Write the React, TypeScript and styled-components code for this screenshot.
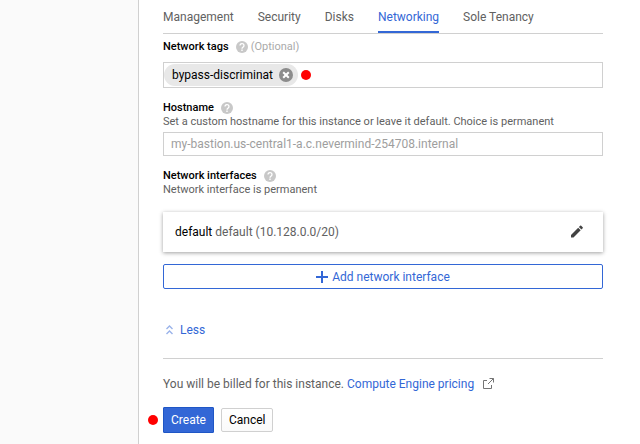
import React from "react";
import styled, { createGlobalStyle, css } from "styled-components";

const blue = "#3367d6";
const line = "#d0d0d0";

const GlobalStyle = createGlobalStyle`
  *, *::before, *::after { box-sizing: border-box; }
  body {
    margin: 0;
    background: #fff;
    color: #000;
    font: 12px/16px Roboto, "Liberation Sans", sans-serif;
  }
  button, input { font: inherit; }
  svg { display: block; flex: none; }
`;

const Page = styled.div`
  display: flex;
  min-height: 100vh;
`;

const SidePanel = styled.aside`
  flex: none;
  width: 139px;
  background: #fafafa;
  border-right: 1px solid ${line};
`;

const Form = styled.form`
  flex: 1;
  min-width: 0;
  padding: 0 37px 11px 24px;
`;

const TabList = styled.div`
  display: flex;
  gap: 24px;
  border-bottom: 1px solid ${line};
`;

const Tab = styled.button<{ $active?: boolean }>`
  height: 33px;
  padding: 2px 0 0;
  border: 0;
  border-bottom: 2px solid ${(p) => (p.$active ? blue : "transparent")};
  background: none;
  color: ${(p) => (p.$active ? blue : "#616161")};
  cursor: pointer;
`;

const Field = styled.section<{ $top: number }>`
  margin-top: ${(p) => p.$top}px;
`;

const FieldHead = styled.div`
  display: flex;
  align-items: center;
  height: 14px;
  font-size: 11px;
  line-height: 14px;
`;

const Label = styled.label`
  font-weight: 500;
`;

const HelpButton = styled.button`
  display: flex;
  margin-left: 6px;
  padding: 0;
  border: 0;
  background: none;
  cursor: help;
`;

const Optional = styled.span`
  margin-left: 3px;
  color: #aaa;
`;

const Hint = styled.p`
  margin: 0;
  color: #616161;
  font-size: 11px;
  line-height: 14px;
`;

const TagBox = styled.div`
  display: flex;
  align-items: center;
  height: 26px;
  margin-top: 8px;
  border: 1px solid ${line};
`;

const Chip = styled.span`
  display: flex;
  align-items: center;
  gap: 6px;
  height: 22px;
  padding: 0 5px 0 8px;
  border-radius: 11px;
  background: #e8e8e8;
`;

const ChipRemove = styled.button`
  padding: 0;
  border: 0;
  background: none;
  cursor: pointer;
`;

const TagInput = styled.input`
  flex: 1;
  min-width: 0;
  border: 0;
  outline: 0;
  background: none;
`;

const dot = css`
  width: 10px;
  height: 10px;
  border-radius: 50%;
  background: #f00;
`;

const TagMarker = styled.i`
  ${dot}
  margin-left: 3px;
`;

const ActionMarker = styled.i`
  ${dot}
  position: absolute;
  top: 8px;
  left: -15px;
`;

const TextInput = styled.input`
  display: block;
  width: 100%;
  height: 24px;
  margin-top: 3px;
  padding: 0 7px;
  border: 1px solid ${line};
  border-radius: 0;
  background: #fff;
  &::placeholder { color: #9e9e9e; opacity: 1; }
`;

const InterfaceCard = styled.div`
  display: flex;
  align-items: center;
  justify-content: space-between;
  height: 40px;
  margin-top: 15px;
  padding: 0 19px 0 12px;
  color: #616161;
  background: #fff;
  box-shadow: 0 1px 4px rgba(0, 0, 0, 0.38);
`;

const InterfaceName = styled.span`
  color: #000;
`;

const IconButton = styled.button`
  padding: 0;
  border: 0;
  background: none;
  cursor: pointer;
`;

const AddButton = styled.button`
  display: flex;
  align-items: center;
  justify-content: center;
  gap: 4px;
  width: 100%;
  height: 25px;
  margin-top: 12px;
  border: 1px solid ${blue};
  border-radius: 2px;
  background: #fff;
  color: ${blue};
  cursor: pointer;
`;

const LessButton = styled.button`
  display: flex;
  align-items: center;
  gap: 7px;
  margin-top: 33px;
  padding: 0 0 0 3px;
  border: 0;
  background: none;
  color: ${blue};
  cursor: pointer;
`;

const Billing = styled.div`
  display: flex;
  align-items: center;
  margin-top: 20px;
  padding-top: 17px;
  border-top: 1px solid ${line};
  color: #616161;
  white-space: pre;
`;

const PricingLink = styled.a`
  display: flex;
  align-items: center;
  gap: 8px;
  color: ${blue};
  text-decoration: none;
`;

const Actions = styled.div`
  position: relative;
  display: flex;
  align-items: center;
  gap: 7px;
  margin-top: 15px;
`;

const ActionButton = styled.button<{ $primary?: boolean }>`
  height: ${(p) => (p.$primary ? 26 : 24)}px;
  padding: 0 7px;
  border: 1px solid ${(p) => (p.$primary ? "#1f56c5" : line)};
  border-radius: ${(p) => (p.$primary ? 1 : 2)}px;
  background: ${(p) => (p.$primary ? blue : "linear-gradient(#fff, #fafafa)")};
  color: ${(p) => (p.$primary ? "#fff" : "#000")};
  cursor: pointer;
`;

const Help = ({ topic }: { topic: string }) => (
  <HelpButton type="button" aria-label={`Help: ${topic}`}>
    <svg width="13" height="12" viewBox="0 0 13 12">
      <circle cx="7" cy="6" r="6" fill="#c8c8c8" />
      <path d="M5 4.500a2 1.900 0 1 1 3.200 1.500C7.400 6.600 7 6.900 7 7.700" fill="none" stroke="#fff" strokeWidth="1.300" />
      <path d="M6.300 8.500h1.400v1.400H6.300z" fill="#fff" />
    </svg>
  </HelpButton>
);

const tabs = ["Management", "Security", "Disks", "Networking", "Sole Tenancy"];

export default function App() {
  return (
    <Page>
      <GlobalStyle />
      <SidePanel />
      <Form onSubmit={(e) => e.preventDefault()}>
        <TabList role="tablist">
          {tabs.map((name) => (
            <Tab key={name} type="button" role="tab" aria-selected={name === "Networking"} $active={name === "Networking"}>
              {name}
            </Tab>
          ))}
        </TabList>

        <Field $top={6}>
          <FieldHead>
            <Label htmlFor="tags">Network tags</Label>
            <Help topic="Network tags" />
            <Optional>(Optional)</Optional>
          </FieldHead>
          <TagBox>
            <Chip>
              bypass-discriminat
              <ChipRemove type="button" aria-label="Remove bypass-discriminat">
                <svg width="14" height="14" viewBox="0 0 14 14">
                  <circle cx="7" cy="7" r="7" fill="#8c8c8c" />
                  <path d="M4.200 4.200l5.600 5.600m0-5.600l-5.600 5.600" stroke="#fff" strokeWidth="2" />
                </svg>
              </ChipRemove>
            </Chip>
            <TagMarker />
            <TagInput id="tags" />
          </TagBox>
        </Field>

        <Field $top={13}>
          <FieldHead>
            <Label htmlFor="hostname">Hostname</Label>
            <Help topic="Hostname" />
          </FieldHead>
          <Hint>Set a custom hostname for this instance or leave it default. Choice is permanent</Hint>
          <TextInput id="hostname" placeholder="my-bastion.us-central1-a.c.nevermind-254708.internal" />
        </Field>

        <Field $top={13}>
          <FieldHead>
            <Label as="span">Network interfaces</Label>
            <Help topic="Network interfaces" />
          </FieldHead>
          <Hint>Network interface is permanent</Hint>
          <InterfaceCard>
            <span>
              <InterfaceName>default</InterfaceName> default (10.128.0.0/20)
            </span>
            <IconButton type="button" aria-label="Edit network interface">
              <svg width="14" height="14" viewBox="0 0 14 14" fill="#424242">
                <path d="M1 10V12.500h2.500l7.200-7.200-2.500-2.500zM12.700 3.300c.3-.3.3-.7 0-1L11.200.800c-.3-.3-.7-.3-1 0L8.900 2.100l2.500 2.500z" />
              </svg>
            </IconButton>
          </InterfaceCard>
          <AddButton type="button">
            <svg width="12" height="12" viewBox="0 0 12 12">
              <path d="M6 0v12M0 6h12" stroke={blue} strokeWidth="2" />
            </svg>
            Add network interface
          </AddButton>
        </Field>

        <LessButton type="button">
          <svg width="7" height="10" viewBox="0 0 7 10" fill="none" stroke="#9ab3ea" strokeWidth="1.400">
            <path d="M.5 4l3-3 3 3M.5 9l3-3 3 3" />
          </svg>
          Less
        </LessButton>

        <Billing>
          {"You will be billed for this instance. "}
          <PricingLink href="#pricing">
            Compute Engine pricing
            <svg width="12" height="14" viewBox="0 0 12 14" fill="none" stroke="#757575">
              <path d="M5 3.500H1.500v8h8V8M7.500 1.500h4v4M11.500 1.500L6 7" />
            </svg>
          </PricingLink>
        </Billing>

        <Actions>
          <ActionMarker />
          <ActionButton type="submit" $primary>Create</ActionButton>
          <ActionButton type="button">Cancel</ActionButton>
        </Actions>
      </Form>
    </Page>
  );
}
